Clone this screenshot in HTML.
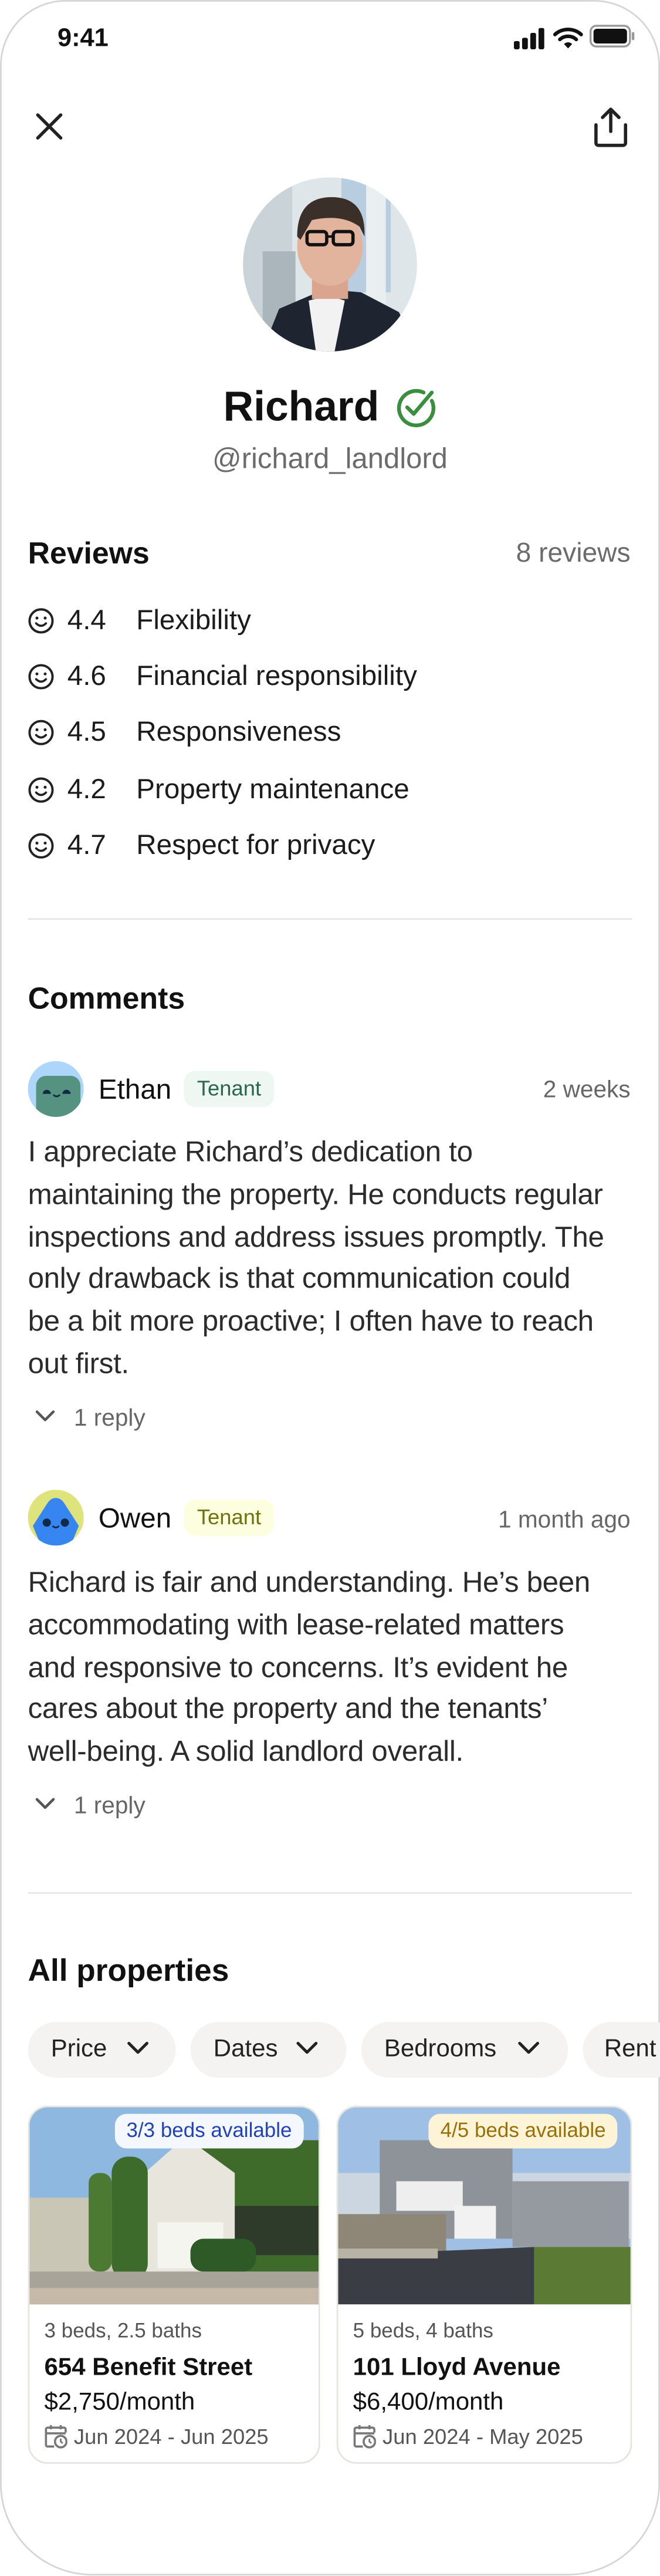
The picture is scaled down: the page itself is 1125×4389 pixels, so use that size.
<!DOCTYPE html>
<html><head><meta charset="utf-8">
<style>
html,body{margin:0;padding:0;background:#fff;}
body{width:1125px;height:4389px;overflow:hidden;position:relative;}
#s{position:absolute;left:0;top:0;width:402px;height:1568px;transform:scale(2.79851);transform-origin:0 0;font-family:"Liberation Sans",sans-serif;color:#111;}
.frame{position:absolute;left:0;top:0;width:400px;height:1566px;border:1px solid #d6d6d6;border-radius:40px 40px 56px 56px;}
.a{position:absolute;white-space:nowrap;}
.h{font-weight:bold;font-size:18.5px;line-height:22px;}
.row{position:absolute;left:17px;height:20px;font-size:17px;line-height:20px;color:#1b1b1b;}
.row svg{position:absolute;left:0;top:2px;}
.row .n{position:absolute;left:24px;}
.row .l{position:absolute;left:66px;white-space:nowrap;}
.div{position:absolute;left:17px;width:368px;height:1px;background:#e8e6e2;}
.name{font-size:17px;line-height:20px;color:#111;}
.badge{position:absolute;height:22px;border-radius:7px;font-size:13px;line-height:22px;padding:0 8px;}
.time{font-size:14.5px;color:#666;line-height:20px;}
.txt{position:absolute;left:17px;font-size:17.6px;line-height:25.8px;color:#2b2b2b;white-space:nowrap;letter-spacing:-0.1px;}
.reply{position:absolute;left:20px;font-size:14.5px;color:#666;line-height:20px;}
.chip{position:absolute;top:1231px;height:34px;border-radius:17px;background:#f4f3f1;font-size:15px;line-height:34px;color:#222;box-sizing:border-box;padding-left:14px;white-space:nowrap;overflow:hidden;}
.chip svg{position:absolute;top:11px;}
.card{position:absolute;top:1282px;width:178px;height:218px;border:1px solid #e6e4df;border-radius:12px;overflow:hidden;box-sizing:border-box;background:#fff;}
.img{position:absolute;left:0;top:0;width:178px;height:120px;}
.bb{position:absolute;top:4px;height:21px;line-height:21px;border-radius:7px;font-size:12.5px;padding:0 7px;white-space:nowrap;}
.c1{position:absolute;left:9px;top:129px;font-size:12.5px;color:#555;}
.c2{position:absolute;left:9px;top:150px;font-size:15px;font-weight:bold;color:#111;white-space:nowrap;}
.c3{position:absolute;left:9px;top:171px;font-size:15px;color:#111;}
.c4{position:absolute;left:9px;top:193px;font-size:13px;color:#555;white-space:nowrap;}
.c4 svg{vertical-align:-3px;margin-right:4px;}
</style></head><body><div id="s">
<div class="frame"></div>
<div class="a" style="left:35px;top:14px;font-size:15.5px;font-weight:bold;line-height:20px;">9:41</div>
<svg class="a" style="left:313px;top:17px" width="20" height="13" viewBox="0 0 20 13"><rect x="0" y="8" width="3.5" height="5" rx="1" fill="#111"/><rect x="5" y="6" width="3.5" height="7" rx="1" fill="#111"/><rect x="10" y="3" width="3.5" height="10" rx="1" fill="#111"/><rect x="15" y="0" width="3.5" height="13" rx="1" fill="#111"/></svg>
<svg class="a" style="left:337px;top:16px" width="18" height="14" viewBox="0 0 18 14"><path d="M1 5 A12 12 0 0 1 17 5" stroke="#111" stroke-width="2.2" fill="none" stroke-linecap="round"/><path d="M4 8 A7.5 7.5 0 0 1 14 8" stroke="#111" stroke-width="2.2" fill="none" stroke-linecap="round"/><path d="M6.5 10.8 L9 13.5 L11.5 10.8 A3.5 3.5 0 0 0 6.5 10.8Z" fill="#111"/></svg>
<svg class="a" style="left:359px;top:15px" width="28" height="14" viewBox="0 0 28 14"><rect x="0.7" y="0.7" width="24" height="12.6" rx="3.5" stroke="#999" stroke-width="1.2" fill="none"/><rect x="2.5" y="2.5" width="20.4" height="9" rx="2" fill="#111"/><rect x="25.8" y="4.5" width="1.6" height="5" rx="0.8" fill="#999"/></svg>
<svg class="a" style="left:21px;top:68px" width="18" height="18" viewBox="0 0 18 18"><path d="M2 2 L16 16 M16 2 L2 16" stroke="#222" stroke-width="2" stroke-linecap="round"/></svg>
<svg class="a" style="left:361px;top:65px" width="22" height="25" viewBox="0 0 22 25"><path d="M11 2 V15 M6 6.5 L11 1.5 L16 6.5" stroke="#222" stroke-width="2" fill="none" stroke-linecap="round" stroke-linejoin="round"/><path d="M2 11 V22 A1.5 1.5 0 0 0 3.5 23.5 H18.5 A1.5 1.5 0 0 0 20 22 V11" stroke="#222" stroke-width="2" fill="none" stroke-linecap="round"/></svg>
<svg class="a" style="left:148px;top:108px" width="106" height="106" viewBox="0 0 106 106">
<defs><clipPath id="cp"><circle cx="53" cy="53" r="53"/></clipPath></defs>
<g clip-path="url(#cp)">
<rect width="106" height="106" fill="#dfe6ea"/>
<rect x="0" y="0" width="30" height="106" fill="#c9d3d8"/>
<rect x="60" y="0" width="30" height="70" fill="#b9cde0"/>
<rect x="75" y="0" width="12" height="106" fill="#e9eef1"/>
<rect x="12" y="45" width="20" height="60" fill="#aab6bc"/>
<path d="M10 110 L22 80 L50 68 L72 70 L95 82 L106 106Z" fill="#1e2430"/>
<path d="M40 75 L52 72 L62 75 L55 110 L45 110Z" fill="#f2f2f2"/>
<rect x="42" y="58" width="22" height="16" fill="#d9a58e"/>
<ellipse cx="53" cy="42" rx="20" ry="24" fill="#e2b39d"/>
<path d="M33 36 Q33 12 54 12 Q75 12 74 36 L71 30 Q60 22 42 26 L35 38Z" fill="#3a2f29"/>
<rect x="39" y="33" width="12" height="8" rx="2" fill="none" stroke="#111" stroke-width="2"/>
<rect x="55" y="33" width="12" height="8" rx="2" fill="none" stroke="#111" stroke-width="2"/>
<path d="M51 36 H55" stroke="#111" stroke-width="1.5"/>
</g></svg>
<div class="a" style="left:136px;top:233px;font-size:25.5px;font-weight:bold;line-height:30px;">Richard</div>
<svg class="a" style="left:240px;top:235px" width="27" height="27" viewBox="0 0 27 27"><path d="M23 9 A10.5 10.5 0 1 1 18 4" stroke="#3a8f3f" stroke-width="2.3" fill="none" stroke-linecap="round"/><path d="M8 13 L12 17 L23 4" stroke="#3a8f3f" stroke-width="2.3" fill="none" stroke-linecap="round" stroke-linejoin="round"/></svg>
<div class="a" style="left:0;width:402px;text-align:center;top:269px;font-size:17.5px;color:#6b6b6b;line-height:20px;">@richard_landlord</div>
<div class="a h" style="left:17px;top:326px;">Reviews</div>
<div class="a" style="right:18px;top:327px;font-size:16.5px;color:#6b6b6b;line-height:20px;">8 reviews</div>
<div class="row" style="top:368px"><svg width="16" height="16" viewBox="0 0 16 16"><circle cx="8" cy="8" r="7" stroke="#222" stroke-width="1.4" fill="none"/><circle cx="5.5" cy="6.3" r="0.9" fill="#222"/><circle cx="10.5" cy="6.3" r="0.9" fill="#222"/><path d="M5 9.5 Q8 12.5 11 9.5" stroke="#222" stroke-width="1.3" fill="none" stroke-linecap="round"/></svg><span class="n">4.4</span><span class="l">Flexibility</span></div>
<div class="row" style="top:402px"><svg width="16" height="16" viewBox="0 0 16 16"><circle cx="8" cy="8" r="7" stroke="#222" stroke-width="1.4" fill="none"/><circle cx="5.5" cy="6.3" r="0.9" fill="#222"/><circle cx="10.5" cy="6.3" r="0.9" fill="#222"/><path d="M5 9.5 Q8 12.5 11 9.5" stroke="#222" stroke-width="1.3" fill="none" stroke-linecap="round"/></svg><span class="n">4.6</span><span class="l">Financial responsibility</span></div>
<div class="row" style="top:436px"><svg width="16" height="16" viewBox="0 0 16 16"><circle cx="8" cy="8" r="7" stroke="#222" stroke-width="1.4" fill="none"/><circle cx="5.5" cy="6.3" r="0.9" fill="#222"/><circle cx="10.5" cy="6.3" r="0.9" fill="#222"/><path d="M5 9.5 Q8 12.5 11 9.5" stroke="#222" stroke-width="1.3" fill="none" stroke-linecap="round"/></svg><span class="n">4.5</span><span class="l">Responsiveness</span></div>
<div class="row" style="top:471px"><svg width="16" height="16" viewBox="0 0 16 16"><circle cx="8" cy="8" r="7" stroke="#222" stroke-width="1.4" fill="none"/><circle cx="5.5" cy="6.3" r="0.9" fill="#222"/><circle cx="10.5" cy="6.3" r="0.9" fill="#222"/><path d="M5 9.5 Q8 12.5 11 9.5" stroke="#222" stroke-width="1.3" fill="none" stroke-linecap="round"/></svg><span class="n">4.2</span><span class="l">Property maintenance</span></div>
<div class="row" style="top:505px"><svg width="16" height="16" viewBox="0 0 16 16"><circle cx="8" cy="8" r="7" stroke="#222" stroke-width="1.4" fill="none"/><circle cx="5.5" cy="6.3" r="0.9" fill="#222"/><circle cx="10.5" cy="6.3" r="0.9" fill="#222"/><path d="M5 9.5 Q8 12.5 11 9.5" stroke="#222" stroke-width="1.3" fill="none" stroke-linecap="round"/></svg><span class="n">4.7</span><span class="l">Respect for privacy</span></div>
<div class="div" style="top:559px"></div>
<div class="a h" style="left:17px;top:597px;">Comments</div>
<svg class="a" style="left:17px;top:646px" width="34" height="34" viewBox="0 0 34 34"><defs><clipPath id="c1"><circle cx="17" cy="17" r="17"/></clipPath></defs><g clip-path="url(#c1)"><rect width="34" height="34" fill="#aed6fb"/><rect x="5" y="9" width="27" height="30" rx="6" fill="#55927f"/><path d="M9 20 A2.5 2.5 0 0 1 14 20Z" fill="#0f2b45"/><path d="M21 20 A2.5 2.5 0 0 1 26 20Z" fill="#0f2b45"/><path d="M15.5 20.5 Q17.5 22.5 19.5 20.5" stroke="#0f2b45" stroke-width="1" fill="none"/></g></svg>
<div class="a name" style="left:60px;top:654px;">Ethan</div>
<div class="badge" style="left:112px;top:652px;background:#eef7f1;color:#2b6650;">Tenant</div>
<div class="a time" style="right:18px;top:654px;">2 weeks</div>
<div class="txt" style="top:689px">I appreciate Richard’s dedication to<br>maintaining the property. He conducts regular<br>inspections and address issues promptly. The<br>only drawback is that communication could<br>be a bit more proactive; I often have to reach<br>out first.</div>
<svg class="a" style="left:21px;top:858px" width="13" height="9" viewBox="0 0 13 9"><path d="M1.5 1.5 L6.5 6.5 L11.5 1.5" stroke="#555" stroke-width="1.6" fill="none" stroke-linecap="round" stroke-linejoin="round"/></svg>
<div class="reply" style="left:45px;top:854px">1 reply</div>
<svg class="a" style="left:17px;top:907px" width="34" height="34" viewBox="0 0 34 34"><defs><clipPath id="c2"><circle cx="17" cy="17" r="17"/></clipPath></defs><g clip-path="url(#c2)"><rect width="34" height="34" fill="#dfe37b"/><path d="M17 5 Q14 5 12 8 L3 22 L8 34 H26 L31 22 L22 8 Q20 5 17 5Z" fill="#3685f0"/><circle cx="11.5" cy="20" r="2.5" fill="#0f2b45"/><circle cx="22.5" cy="20" r="2.5" fill="#0f2b45"/><path d="M15 22 Q17 24 19 22" stroke="#0f2b45" stroke-width="1" fill="none"/></g></svg>
<div class="a name" style="left:60px;top:915px;">Owen</div>
<div class="badge" style="left:112px;top:913px;background:#fdfde0;color:#6f730d;">Tenant</div>
<div class="a time" style="right:18px;top:916px;">1 month ago</div>
<div class="txt" style="top:951px">Richard is fair and understanding. He’s been<br>accommodating with lease-related matters<br>and responsive to concerns. It’s evident he<br>cares about the property and the tenants’<br>well-being. A solid landlord overall.</div>
<svg class="a" style="left:21px;top:1094px" width="13" height="9" viewBox="0 0 13 9"><path d="M1.5 1.5 L6.5 6.5 L11.5 1.5" stroke="#555" stroke-width="1.6" fill="none" stroke-linecap="round" stroke-linejoin="round"/></svg>
<div class="reply" style="left:45px;top:1090px">1 reply</div>
<div class="div" style="top:1152px"></div>
<div class="a h" style="left:17px;top:1190px;font-size:19px;">All properties</div>
<div class="chip" style="left:17px;width:90px">Price<svg style="left:60px" width="14" height="10" viewBox="0 0 14 10"><path d="M1.5 2 L7 7.5 L12.5 2" stroke="#222" stroke-width="1.8" fill="none" stroke-linecap="round" stroke-linejoin="round"/></svg></div>
<div class="chip" style="left:116px;width:95px">Dates<svg style="left:64px" width="14" height="10" viewBox="0 0 14 10"><path d="M1.5 2 L7 7.5 L12.5 2" stroke="#222" stroke-width="1.8" fill="none" stroke-linecap="round" stroke-linejoin="round"/></svg></div>
<div class="chip" style="left:220px;width:126px">Bedrooms<svg style="left:95px" width="14" height="10" viewBox="0 0 14 10"><path d="M1.5 2 L7 7.5 L12.5 2" stroke="#222" stroke-width="1.8" fill="none" stroke-linecap="round" stroke-linejoin="round"/></svg></div>
<div class="chip" style="left:355px;width:60px;padding-left:13px">Rent</div>
<div class="card" style="left:17px">
<svg class="img" viewBox="0 0 178 120" preserveAspectRatio="none"><rect width="178" height="120" fill="#8fb8e0"/><rect x="0" y="55" width="60" height="45" fill="#c9c6b6"/><rect x="90" y="20" width="88" height="80" fill="#3f6b2a"/><rect x="90" y="60" width="88" height="30" fill="#2f3b2a"/><path d="M70 40 L95 18 L125 40 V100 H70Z" fill="#e8e5dc"/><rect x="78" y="70" width="40" height="28" fill="#f5f5f0"/><rect x="50" y="30" width="22" height="75" rx="10" fill="#3d6b2c"/><rect x="36" y="40" width="14" height="60" rx="6" fill="#4c7a33"/><rect x="98" y="80" width="40" height="20" rx="8" fill="#2e5a27"/><rect x="0" y="100" width="178" height="20" fill="#a9a49a"/><rect x="0" y="110" width="178" height="10" fill="#c7b9a8"/></svg>
<div class="bb" style="left:52px;background:#f4f7fe;color:#2243b8;">3/3 beds available</div>
<div class="c1">3 beds, 2.5 baths</div><div class="c2">654 Benefit Street</div><div class="c3">$2,750/month</div>
<div class="c4"><svg width="14" height="15" viewBox="0 0 14 15"><path d="M6 13.5 H2 A1 1 0 0 1 1 12.5 V3 A1 1 0 0 1 2 2 H12 A1 1 0 0 1 13 3 V5 M1 5.5 H13 M4 0.5 V3 M10 0.5 V3" stroke="#777" stroke-width="1.3" fill="none"/><circle cx="10" cy="10.5" r="3.5" stroke="#777" stroke-width="1.3" fill="#fff"/><path d="M10 8.7 V10.5 L11.2 11.5" stroke="#777" stroke-width="1" fill="none"/></svg>Jun 2024 - Jun 2025</div>
</div>
<div class="card" style="left:205px;width:180px">
<svg class="img" style="width:180px" viewBox="0 0 178 120" preserveAspectRatio="none"><rect width="178" height="120" fill="#9fc0e4"/><rect x="0" y="40" width="178" height="40" fill="#cbd6e0"/><path d="M25 20 H105 V80 H25Z" fill="#8e9399"/><rect x="105" y="45" width="70" height="40" fill="#959aa0"/><rect x="35" y="45" width="40" height="18" fill="#eeeeee"/><rect x="70" y="60" width="25" height="20" fill="#f2f2f2"/><rect x="0" y="65" width="65" height="25" fill="#8e8677"/><path d="M0 90 L0 120 H118 L118 85 Z" fill="#3a3d44"/><path d="M118 85 H178 V120 H118Z" fill="#5b7a33"/><rect x="0" y="86" width="60" height="6" fill="#b9b3a6"/></svg>
<div class="bb" style="right:8px;background:#fdf4d8;color:#9a6f05;">4/5 beds available</div>
<div class="c1">5 beds, 4 baths</div><div class="c2">101 Lloyd Avenue</div><div class="c3">$6,400/month</div>
<div class="c4"><svg width="14" height="15" viewBox="0 0 14 15"><path d="M6 13.5 H2 A1 1 0 0 1 1 12.5 V3 A1 1 0 0 1 2 2 H12 A1 1 0 0 1 13 3 V5 M1 5.5 H13 M4 0.5 V3 M10 0.5 V3" stroke="#777" stroke-width="1.3" fill="none"/><circle cx="10" cy="10.5" r="3.5" stroke="#777" stroke-width="1.3" fill="#fff"/><path d="M10 8.7 V10.5 L11.2 11.5" stroke="#777" stroke-width="1" fill="none"/></svg>Jun 2024 - May 2025</div>
</div>
</div></body></html>
